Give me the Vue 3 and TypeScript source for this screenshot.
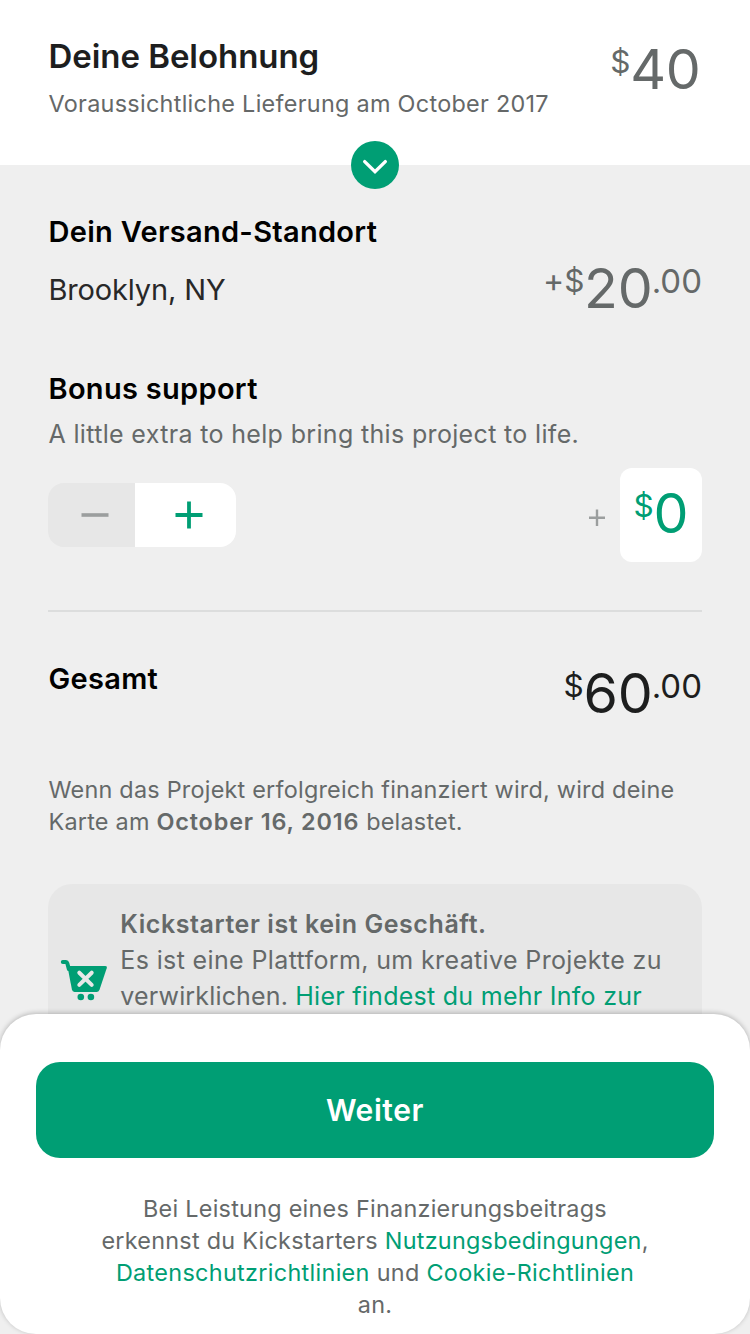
<script setup lang="ts">
interface Amount {
  prefix: string
  whole: string
  cents?: string
}

const reward: Amount = { prefix: '', whole: '40' }
const shipping: Amount = { prefix: '+', whole: '20', cents: '.00' }
const bonus: Amount = { prefix: '', whole: '0' }
const total: Amount = { prefix: '', whole: '60', cents: '.00' }
</script>

<template>
  <main class="screen">
    <header class="header">
      <div>
        <h1 class="title">Deine Belohnung</h1>
        <p class="delivery">Voraussichtliche Lieferung am October 2017</p>
      </div>
      <div class="price reward-price">
        <span class="sup dollar">$</span><span class="big">{{ reward.whole }}</span>
      </div>
      <button class="expand" aria-label="Details">
        <svg width="48" height="48" viewBox="0 0 48 48">
          <path d="M13.7 20.6 24 30.6 34.3 20.6" fill="none" stroke="#fff" stroke-width="3.4" stroke-linecap="round" />
        </svg>
      </button>
    </header>

    <section class="shipping">
      <div>
        <h2 class="heading">Dein Versand-Standort</h2>
        <p class="place">Brooklyn, NY</p>
      </div>
      <div class="price shipping-price">
        <span class="sup plus">{{ shipping.prefix }}</span><span class="sup dollar">$</span><span class="big">{{ shipping.whole }}</span><span class="sup cents">{{ shipping.cents }}</span>
      </div>
    </section>

    <section class="bonus">
      <h2 class="heading bonus-heading">Bonus support</h2>
      <p class="hint">A little extra to help bring this project to life.</p>
      <div class="bonus-row">
        <div class="stepper">
          <button class="minus" aria-label="minus">
            <svg width="28" height="28" viewBox="0 0 28 28"><path d="M.5 14H27.5" stroke="#9b9e9e" stroke-width="3.6" /></svg>
          </button>
          <button class="add" aria-label="plus">
            <svg width="28" height="28" viewBox="0 0 28 28"><path d="M.5 14H27.5M14 .5V27.5" stroke="#009e74" stroke-width="3.8" /></svg>
          </button>
        </div>
        <div class="bonus-value">
          <svg width="16" height="18" viewBox="0 0 16 18"><path d="M0 8.8H16M8 .5V17" stroke="#9b9e9e" stroke-width="2.4" /></svg>
          <div class="field price">
            <span class="sup dollar">$</span><span class="big">{{ bonus.whole }}</span>
          </div>
        </div>
      </div>
    </section>

    <section class="total">
      <h2 class="heading">Gesamt</h2>
      <div class="price total-price">
        <span class="sup dollar">$</span><span class="big">{{ total.whole }}</span><span class="sup cents">{{ total.cents }}</span>
      </div>
    </section>

    <p class="charge">
      Wenn das Projekt erfolgreich finanziert wird, wird deine<br />
      Karte am <b>October 16, 2016</b> belastet.
    </p>

    <aside class="notice">
      <svg class="cart" width="48" height="42" viewBox="0 0 48 42">
        <path d="M2.8 2H6Q7 2 7.3 3.2L8.8 9" fill="none" stroke="#009e74" stroke-width="4" stroke-linecap="round" stroke-linejoin="round" />
        <path d="M7.4 6H45.2Q47.4 6 46.7 8.2L39.5 29.8Q38.7 32 36.5 32H14.5Q12.4 32 11.9 29.6Z" fill="#009e74" />
        <path d="M19.3 12.7 31.7 24.9M31.7 12.7 19.3 24.9" stroke="#e8e8e8" stroke-width="4" stroke-linecap="round" />
        <circle cx="20.8" cy="37" r="3.3" fill="#009e74" /><circle cx="30.9" cy="37" r="3.3" fill="#009e74" />
      </svg>
      <p class="notice-text">
        <b>Kickstarter ist kein Geschäft.</b><br />
        <span class="platform">Es ist eine Plattform, um kreative Projekte zu</span><br />
        <span class="intro">verwirklichen. </span><a>Hier findest du mehr Info zur</a>
      </p>
    </aside>

    <footer class="sheet">
      <button class="continue">Weiter</button>
      <p class="legal">
        Bei Leistung eines Finanzierungsbeitrags<br />
        erkennst du Kickstarters <a>Nutzungsbedingungen</a>,<br />
        <span class="policies"><a>Datenschutzrichtlinien</a> und <a>Cookie-Richtlinien</a></span><br />
        an.
      </p>
    </footer>
  </main>
</template>

<style>
body { margin: 0; background: #efefef; }
</style>

<style scoped>
.screen {
  position: relative;
  width: 750px;
  height: 1334px;
  overflow: hidden;
  background: #efefef;
  color: #656969;
  font-family: Inter, "Liberation Sans", sans-serif;
}
h1, h2, p { margin: 0; }
button { border: 0; padding: 0; font: inherit; }
svg { display: block; }
a { color: #009e74; }
b { font-weight: 600; }

.header {
  position: relative;
  display: flex;
  justify-content: space-between;
  box-sizing: border-box;
  height: 165px;
  padding: 35px 49.5px 0 48.5px;
  background: #fff;
}
.title { font-size: 33px; line-height: 42px; font-weight: 600; letter-spacing: -0.05px; color: #1d1e1e; white-space: nowrap; }
.delivery { margin-top: 11px; font-size: 23.4px; line-height: 32px; letter-spacing: 0.29px; color: #656868; white-space: nowrap; }
.expand {
  position: absolute;
  left: 351px;
  bottom: -24px;
  width: 48px;
  height: 48px;
  border-radius: 50%;
  background: #009e74;
}

.price { display: flex; align-items: flex-start; white-space: nowrap; }
.big { font-size: 55.5px; line-height: 56px; letter-spacing: -0.3px; }
.sup { font-size: 33px; line-height: 42px; }
.dollar { font-size: 31.5px; margin-right: -0.3px; }
.cents { margin-left: -0.7px; }
.plus { font-size: 32px; }
.reward-price { margin-top: 6px; }

.shipping { display: flex; justify-content: space-between; height: 158px; padding: 46px 48px 0 48.5px; box-sizing: border-box; }
.heading { font-size: 29px; line-height: 42px; font-weight: 600; letter-spacing: 0.3px; color: #000; white-space: nowrap; }
.place { margin-top: 16px; font-size: 29px; line-height: 42px; letter-spacing: -0.15px; color: #282828; }
.shipping-price { margin-top: 49px; }

.bonus { margin: 0 48px; height: 289px; border-bottom: 2px solid #dcdddd; padding-top: 45px; box-sizing: border-box; }
.bonus-heading, .hint { margin-left: 0.5px; }
.hint { margin-top: 6px; font-size: 25px; line-height: 36px; letter-spacing: 0.34px; }
.bonus-row { display: flex; justify-content: space-between; align-items: center; height: 94px; margin-top: 16px; }
.stepper { display: flex; height: 64px; border-radius: 16px; overflow: hidden; }
.stepper button { display: flex; align-items: center; justify-content: center; }
.minus { width: 87px; padding-left: 7px; background: #e7e7e7; }
.add { width: 101px; padding-left: 7px; background: #fff; }
.bonus-value { display: flex; align-items: center; gap: 15px; }
.bonus-value svg { margin-top: 5px; }
.field { box-sizing: border-box; width: 82px; height: 94px; border-radius: 12px; padding: 17px 0 0 13.5px; background: #fff; color: #009e74; }

.total { display: flex; justify-content: space-between; height: 160px; padding: 46px 48px 0 48.5px; box-sizing: border-box; }
.total-price { margin-top: 7px; color: #1d1e1e; }

.charge { margin: 2px 0 0 48.5px; font-size: 23.4px; line-height: 32px; letter-spacing: 0.23px; white-space: nowrap; }
.charge b { letter-spacing: 0.85px; }

.notice { display: flex; margin: 46px 48px 0; height: 200px; border-radius: 24px; background: #e7e7e7; }
.cart { flex: none; margin: 76px 0 0 12px; }
.notice-text { margin: 22px 0 0 12.3px; font-size: 25px; line-height: 36px; letter-spacing: 0.27px; white-space: nowrap; }
.notice-text b { letter-spacing: 0.57px; }
.platform { letter-spacing: 0.37px; }
.intro { letter-spacing: 0.16px; }

.sheet {
  position: absolute;
  inset: 1014px 0 0;
  box-sizing: border-box;
  padding: 48px 36px 0;
  border-radius: 36px;
  background: #fff;
  box-shadow: 0 -1px 5px rgba(0, 0, 0, 0.24);
}
.continue { display: block; width: 678px; height: 96px; border-radius: 24px; background: #009e74; color: #fff; font-size: 30px; font-weight: 600; letter-spacing: 0.6px; }
.legal { margin-top: 35px; text-align: center; font-size: 23.4px; line-height: 32px; letter-spacing: 0.26px; white-space: nowrap; }
.policies { letter-spacing: 0.32px; }
</style>
